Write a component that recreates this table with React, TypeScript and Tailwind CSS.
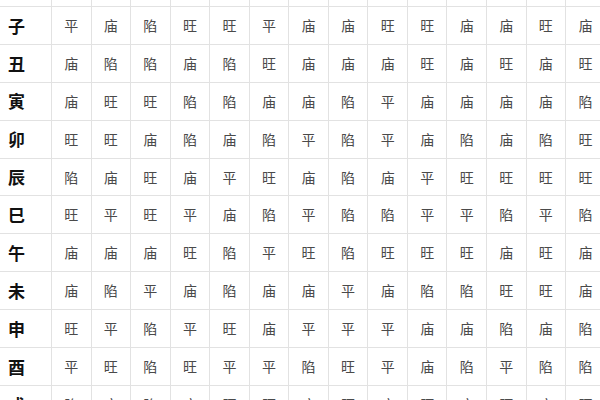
const rows: [string, string][] = [
  ['子', '平庙陷旺旺平庙庙旺旺庙庙旺庙'],
  ['丑', '庙陷陷庙陷旺庙庙庙旺庙旺庙旺'],
  ['寅', '庙旺旺陷陷庙庙陷平庙庙庙庙陷'],
  ['卯', '旺旺庙陷庙陷平陷平庙陷庙陷旺'],
  ['辰', '陷庙旺庙平旺庙陷庙平旺旺旺旺'],
  ['巳', '旺平旺平庙陷平陷陷平平陷平陷'],
  ['午', '庙庙庙旺陷平旺陷旺旺旺庙旺庙'],
  ['未', '庙陷平庙陷庙庙平庙陷陷旺旺庙'],
  ['申', '旺平陷平旺庙平平平庙庙陷庙陷'],
  ['酉', '平旺陷旺平平陷旺平庙陷平陷陷'],
  ['戌', '陷庙陷庙旺旺庙旺庙旺庙旺庙旺'],
];

const cols = 'grid grid-cols-[52px_repeat(14,39.55px)]';

function Row({ label, values }: { label: string; values: string }) {
  return (
    <div className={`${cols} h-[37.9px] border-b border-[#e2e2e2]`}>
      <div className="flex items-center pl-[8px] border-r border-[#e2e2e2] text-[17px] font-bold text-[#111]">
        {label}
      </div>
      {values.split('').map((v, i) => (
        <div
          key={i}
          className="flex items-center justify-center border-r border-[#e2e2e2] text-[14px] text-[#4a4a4a]"
        >
          {v}
        </div>
      ))}
    </div>
  );
}

export default function App() {
  return (
    <div
      className="w-[600px] h-[400px] overflow-hidden bg-white"
      style={{ fontFamily: '"Noto Sans CJK SC", "Noto Sans", sans-serif' }}
    >
      <div className="w-[606px]">
        {/* header row, cut off at the top */}
        <div className={`${cols} h-[7px] border-b border-[#e2e2e2]`}>
          {Array.from({ length: 15 }).map((_, i) => (
            <div key={i} className="border-r border-[#e2e2e2]" />
          ))}
        </div>
        {rows.map(([label, values]) => (
          <Row key={label} label={label} values={values} />
        ))}
      </div>
    </div>
  );
}
